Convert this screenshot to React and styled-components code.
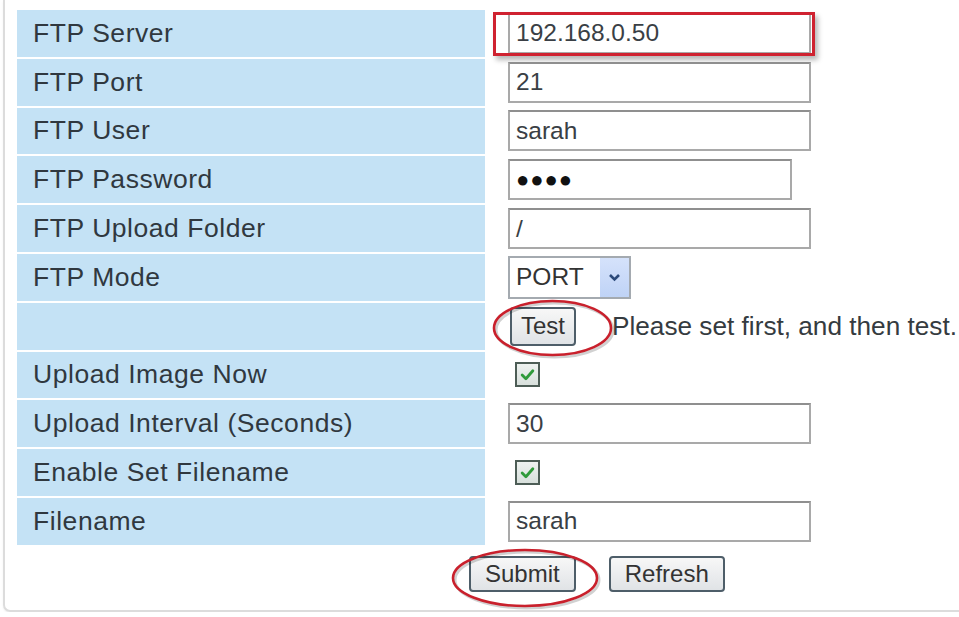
import React from "react";
import styled, { createGlobalStyle } from "styled-components";

const GlobalStyle = createGlobalStyle`
    html, body {
        margin: 0;
        padding: 0;
        background: #ffffff;
        overflow: hidden;
    }
    body {
        font-family: "Liberation Sans", Arial, sans-serif;
        color: #333a40;
    }
`;

const Frame = styled.div`
    margin-left: 3px;
    width: calc(100vw - 3px);
    border: 2px solid #dcdcdc;
    border-top: none;
    border-right: none;
    border-radius: 0 0 0 7px;
    box-shadow: 1px 1px 3px rgba(0, 0, 0, 0.12);
    padding: 10px 0 18px 12px;
    box-sizing: border-box;
    overflow: hidden;
`;

const Grid = styled.div`
    display: grid;
    grid-template-columns: 468px 1fr;
    row-gap: 2px;
`;

const Label = styled.div`
    height: 46.8px;
    background: #c4e2f5;
    display: flex;
    align-items: center;
    padding-left: 16px;
    font-size: 26.5px;
    letter-spacing: 0.55px;
    color: #30383f;
`;

const Value = styled.div`
    height: 46.8px;
    display: flex;
    align-items: center;
    padding-left: ${p => p.$indent || 23}px;
    position: relative;
`;

const TextInput = styled.div`
    width: ${p => p.$width || 303}px;
    height: 41px;
    box-sizing: border-box;
    border: 2px solid #a9a9a9;
    border-top-color: #8f8f8f;
    background: #fff;
    display: flex;
    align-items: center;
    padding-left: 6px;
    font-size: 24.5px;
    color: #3a3f45;
`;

const Dots = styled.span`
    font-size: 22px;
    letter-spacing: 1px;
    color: #111;
`;

const Select = styled.div`
    width: 123px;
    height: 43px;
    box-sizing: border-box;
    border: 2px solid #a4aab0;
    display: flex;
    align-items: stretch;
    font-size: 24.5px;
    color: #333;
`;

const SelectText = styled.div`
    flex: 1;
    display: flex;
    align-items: center;
    padding-left: 6px;
`;

const SelectArrow = styled.div`
    width: 29px;
    background: linear-gradient(#d5e2fb, #bfd3f6);
    display: flex;
    align-items: center;
    justify-content: center;
`;

const Button = styled.div`
    height: ${p => p.$height || 36}px;
    box-sizing: border-box;
    padding: 0 ${p => p.$pad || 12}px;
    border: 2px solid #4e5e69;
    border-radius: 4px;
    background: linear-gradient(#f7f7f7, #e0e3e6);
    display: flex;
    align-items: center;
    font-size: 24px;
    color: #333;
`;

const Hint = styled.span`
    margin-left: 36px;
    font-size: 26.2px;
    color: #353b40;
    white-space: nowrap;
`;

const Check = styled.div`
    width: 25px;
    height: 25px;
    box-sizing: border-box;
    border: 2px solid #4d5d56;
    background: linear-gradient(#eef2f0, #d8e0dc);
    display: flex;
    align-items: center;
    justify-content: center;
`;

const Buttons = styled.div`
    display: flex;
    gap: 33px;
    padding: 11px 0 0 452px;
    position: relative;
`;

const RedBox = styled.div`
    position: absolute;
    left: 8px;
    top: 2px;
    width: 322px;
    height: 44px;
    box-sizing: border-box;
    border: 3px solid #cf2230;
    box-shadow: 3px 4px 5px rgba(0, 0, 0, 0.28);
    pointer-events: none;
`;

const Ring = styled.svg`
    position: absolute;
    left: ${p => p.$left}px;
    top: ${p => p.$top}px;
    overflow: visible;
    pointer-events: none;
`;

const CheckMark = () => (
    <svg width="15" height="13" viewBox="0 0 14 12">
        <path d="M2 6.5 L5.5 10 L12 2.5" fill="none" stroke="#2f9a3a" strokeWidth="2.6" strokeLinecap="round" strokeLinejoin="round" />
    </svg>
);

const Ellipse = ({ left, top, w, h }) => (
    <Ring $left={left} $top={top} width={w} height={h}>
        <ellipse cx={w / 2 + 2} cy={h / 2 + 2} rx={w / 2 - 2} ry={h / 2 - 2} fill="none" stroke="rgba(0,0,0,0.18)" strokeWidth="3" />
        <ellipse cx={w / 2} cy={h / 2} rx={w / 2 - 2} ry={h / 2 - 2} fill="none" stroke="#c9202c" strokeWidth="2.6" />
    </Ring>
);

const rows = [
    { label: "FTP Server", input: "192.168.0.50", boxed: true },
    { label: "FTP Port", input: "21" },
    { label: "FTP User", input: "sarah" },
    { label: "FTP Password", password: true },
    { label: "FTP Upload Folder", input: "/" },
    { label: "FTP Mode", select: "PORT" },
    { label: "", test: true },
    { label: "Upload Image Now", check: true },
    { label: "Upload Interval (Seconds)", input: "30" },
    { label: "Enable Set Filename", check: true },
    { label: "Filename", input: "sarah" }
];

const renderValue = row => {
    if (row.password) {
        return (
            <TextInput $width={284}>
                <Dots>●●●●</Dots>
            </TextInput>
        );
    }
    if (row.select) {
        return (
            <Select>
                <SelectText>{row.select}</SelectText>
                <SelectArrow>
                    <svg width="13" height="9" viewBox="0 0 13 9">
                        <path d="M2 2 L6.5 6.5 L11 2" fill="none" stroke="#2c4a7a" strokeWidth="2.6" />
                    </svg>
                </SelectArrow>
            </Select>
        );
    }
    if (row.test) {
        return (
            <>
                <Button $height={39} $pad={9}>Test</Button>
                <Hint>Please set first, and then test.</Hint>
                <Ellipse left={7} top={-4} w={121} h={58} />
            </>
        );
    }
    if (row.check) {
        return <Check><CheckMark /></Check>;
    }
    return (
        <>
            <TextInput>{row.input}</TextInput>
            {row.boxed && <RedBox />}
        </>
    );
};

const App = () => (
    <>
        <GlobalStyle />
        <Frame>
            <Grid>
                {rows.map((row, i) => (
                    <React.Fragment key={i}>
                        <Label>{row.label}</Label>
                        <Value $indent={row.check ? 30 : row.test ? 25 : 23}>{renderValue(row)}</Value>
                    </React.Fragment>
                ))}
            </Grid>
            <Buttons>
                <Button $pad={14}>Submit</Button>
                <Button $pad={14}>Refresh</Button>
                <Ellipse left={434} top={3} w={148} h={60} />
            </Buttons>
        </Frame>
    </>
);

export default App;
